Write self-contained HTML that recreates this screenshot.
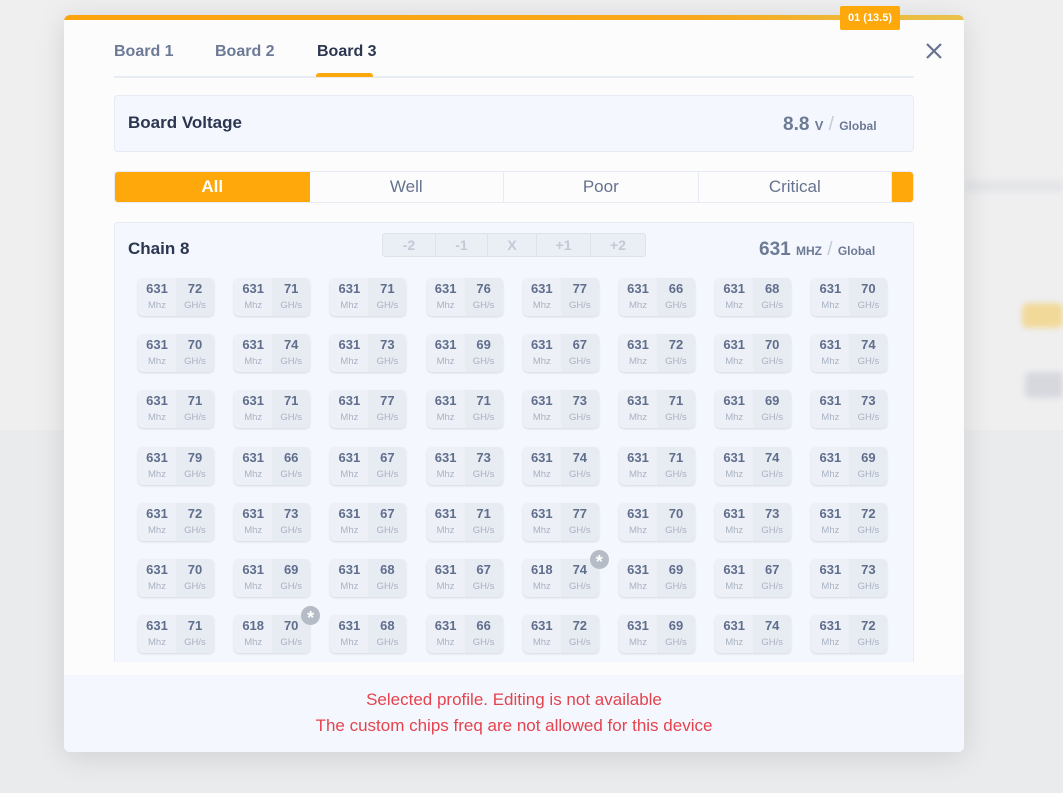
<!DOCTYPE html>
<html><head><meta charset="utf-8"><style>
*{box-sizing:border-box;margin:0;padding:0}
body{width:1063px;height:793px;overflow:hidden;background:#eaebed;font-family:"Liberation Sans",sans-serif;position:relative}
.bgtop{position:absolute;left:0;top:0;width:1063px;height:430px;background:#efeff0}
.bgl{position:absolute;left:965px;top:180px;width:98px;height:12px;background:#e4e5e8;filter:blur(3px)}
.bgo{position:absolute;left:1022px;top:303px;width:41px;height:25px;background:#f1d99a;border-radius:6px;filter:blur(3px)}
.bgg{position:absolute;left:1025px;top:372px;width:38px;height:26px;background:#d6d8de;border-radius:5px;filter:blur(3px)}
.modal{position:absolute;left:64px;top:15px;width:900px;height:737px;background:#fcfcfd;border-radius:6px;box-shadow:0 4px 30px rgba(0,0,0,.12);overflow:hidden}
.bar{position:absolute;left:0;top:0;width:900px;height:5px;background:linear-gradient(90deg,#fba40e 0%,#f8a81a 70%,#e9c24d 100%)}
.badge{position:absolute;left:840px;top:6px;width:60px;height:24px;background:#fea80c;color:#fff;font-weight:bold;font-size:11px;text-align:center;line-height:24px;border-radius:2px}
.close{position:absolute;left:860px;top:26px}
.tabs{position:absolute;left:50px;top:28px;font-weight:bold;font-size:16px;color:#6c7a96}
.tabs span{position:absolute;top:0;white-space:nowrap}
.tline{position:absolute;left:50px;top:61px;width:800px;height:2px;background:#e8ecf3}
.tact{position:absolute;left:252px;top:58px;width:57px;height:4px;background:#fea80c;border-radius:3px 3px 0 0}
.box{position:absolute;left:50px;width:800px;background:#f4f7fd;border:1px solid #e6ebf4;border-radius:4px}
.h{position:absolute;font-weight:bold;font-size:17px;color:#2c3650}
.val{position:absolute;white-space:nowrap;color:#6c7a96;font-weight:bold}
.filt{position:absolute;left:50px;top:156px;width:800px;height:32px;border:1px solid #e6ebf4;border-radius:4px;background:#fcfcfd;display:flex;overflow:hidden}
.filt div{height:30px;line-height:30px;text-align:center;font-size:17px;color:#66738f;border-right:1px solid #e6ebf4}
.btns{position:absolute;left:318px;top:218px;width:264px;height:24px;border:1px solid #dde2eb;border-radius:3px;background:#eaeef5;display:flex}
.btns div{line-height:22px;text-align:center;font-weight:bold;font-size:14px;color:#c3cad7;border-right:1px solid #dde2eb}
.chip{position:absolute;width:76px;height:38px;border-radius:5px;background:#edf0f6;box-shadow:0 1px 2px rgba(0,0,0,.12);display:flex;overflow:hidden}
.chip div{width:38px;text-align:center}
.chip div:last-child{background:#e7ebf2}
.chip b{display:block;font-size:13px;color:#5f6e8c;margin-top:3px;line-height:15px}
.chip i{display:block;font-style:normal;font-size:9.5px;color:#a9b2c4;margin-top:4px}
.ast{position:absolute;width:19px;height:19px;border-radius:50%;background:#b6bcc6;color:#fff;font-weight:bold;font-size:18px;text-align:center;line-height:25px}
.foot{position:absolute;left:0;top:660px;width:900px;height:77px;background:#f4f7fd;text-align:center;color:#e5434e;font-size:17px;line-height:26px;padding-top:12px}
</style></head><body>
<div class="bgtop"></div><div class="bgl"></div><div class="bgo"></div><div class="bgg"></div>
<div class="modal">
<div class="bar"></div>
<div class="tabs"><span style="left:0">Board 1</span><span style="left:101px">Board 2</span><span style="left:203px;color:#2c3650">Board 3</span></div>
<div class="tline"></div><div class="tact"></div>
<svg class="close" width="20" height="20" viewBox="0 0 20 20"><path d="M3 3L17 17M17 3L3 17" stroke="#66738f" stroke-width="2.2"/></svg>
<div class="box" style="top:80px;height:57px"><div class="h" style="left:13px;top:17px">Board Voltage</div>
<div class="val" style="left:668px;top:18px;font-size:19px">8.8 <span style="font-size:13px">V</span> <span style="font-weight:normal;color:#c3cad7;font-size:19px">/</span> <span style="font-size:12px">Global</span></div></div>
<div class="filt"><div style="width:195px;background:#fea80c;color:#fff;font-weight:bold;border:none">All</div><div style="width:195px">Well</div><div style="width:195px">Poor</div><div style="width:194px">Critical</div><div style="width:21px;background:#fea80c;border:none"></div></div>
<div class="box" style="top:207px;height:440px;border-bottom:none;border-radius:4px 4px 0 0">
<div class="h" style="left:13px;top:16px">Chain 8</div>
<div class="val" style="left:644px;top:16px;font-size:19px">631 <span style="font-size:12px">MHZ</span> <span style="font-weight:normal;color:#c3cad7;font-size:19px">/</span> <span style="font-size:12px">Global</span></div>
</div>
<div class="btns"><div style="width:53px">-2</div><div style="width:52px">-1</div><div style="width:49px">X</div><div style="width:54px">+1</div><div style="width:54px;border:none">+2</div></div>
<div id="g"></div>
<div class="foot">Selected profile. Editing is not available<br>The custom chips freq are not allowed for this device</div>
</div>
<div class="badge">01 (13.5)</div>
<script>
var d=[[72,71,71,76,77,66,68,70],[70,74,73,69,67,72,70,74],[71,71,77,71,73,71,69,73],[79,66,67,73,74,71,74,69],[72,73,67,71,77,70,73,72],[70,69,68,67,74,69,67,73],[71,70,68,66,72,69,74,72]];
var h='';
for(var r=0;r<7;r++)for(var c=0;c<8;c++){var x=74+c*96.2,y=263+r*56.2;var f=((r==5&&c==4)||(r==6&&c==1))?618:631;
h+='<div class="chip" style="left:'+x+'px;top:'+y+'px"><div><b>'+f+'</b><i>Mhz</i></div><div><b>'+d[r][c]+'</b><i>GH/s</i></div></div>';
if(f==618)h+='<div class="ast" style="left:'+(x+67)+'px;top:'+(y-9)+'px">*</div>';}
document.getElementById('g').innerHTML=h;
</script>
</body></html>
